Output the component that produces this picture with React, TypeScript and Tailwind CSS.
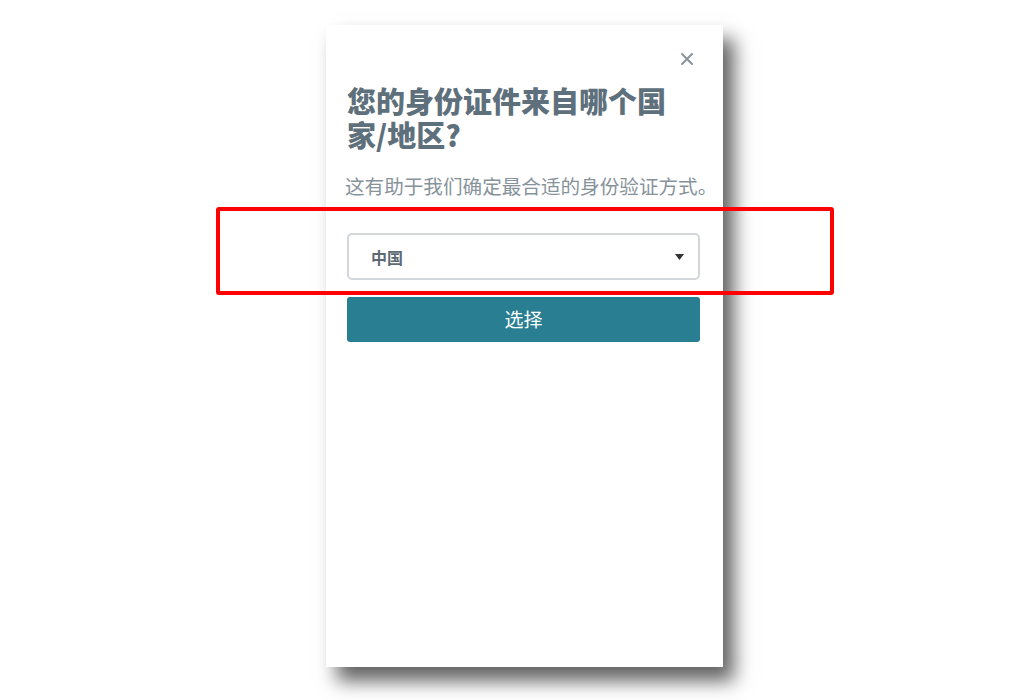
export default function App() {
  const cjk = { fontFamily: '"Noto Sans CJK SC", "Noto Sans", sans-serif' }

  return (
    <div className="relative w-[1030px] h-[700px] bg-white overflow-hidden" style={cjk}>
      <div className="ml-[326px] mt-[25px] w-[397px] h-[642px] bg-white shadow-[11px_14px_18px_rgba(0,0,0,0.62)] px-[21px] pt-[23px]">
        <div className="flex justify-end h-[22px] pr-[8px]">
          <svg width="14" height="14" viewBox="0 0 14 14" className="mt-[4px]">
            <path d="M2 2 L12 12 M12 2 L2 12" stroke="#8a939b" strokeWidth="2" strokeLinecap="round" />
          </svg>
        </div>

        <h1 className="mt-[13px] max-w-[330px] text-[29px] leading-[34px] font-black text-[#5e707c]">
          您的身份证件来自哪个国家/地区?
        </h1>

        <p className="mt-[22px] -ml-[2px] whitespace-nowrap text-[19.6px] leading-[26px] text-[#87939b]">
          这有助于我们确定最合适的身份验证方式。
        </p>

        <div className="mt-[34px] w-[353px] h-[47px] rounded-[5px] border-2 border-[#d3d6da] flex items-center justify-between pl-[22px] pr-[14px]">
          <span className="text-[16px] font-bold text-[#5d6a73]">中国</span>
          <svg width="9" height="6" viewBox="0 0 9 6">
            <path d="M0 0 L9 0 L4.5 6 Z" fill="#333" />
          </svg>
        </div>

        <button className="mt-[17px] w-[353px] h-[45px] rounded-[3px] bg-[#2a7e91] text-white text-[19px] flex items-center justify-center">
          选择
        </button>
      </div>

      <div className="absolute left-[216px] top-[207px] w-[618px] h-[88px] border-[4px] border-[#ff0000] rounded-[3px]" />
    </div>
  )
}
